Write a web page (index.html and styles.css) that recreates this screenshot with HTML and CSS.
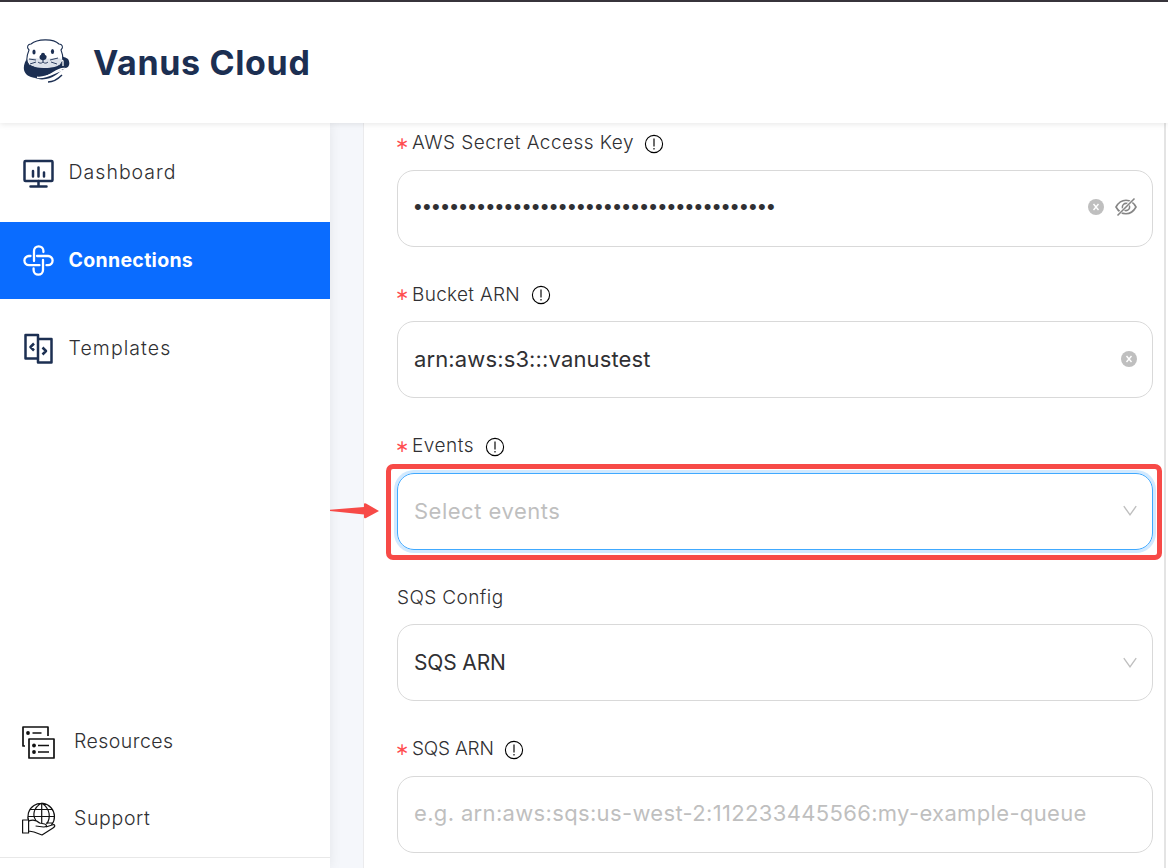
FILE: index.html
```html
<!DOCTYPE html>
<html lang="en">
<head>
<meta charset="utf-8">
<title>Vanus Cloud</title>
<link rel="stylesheet" href="styles.css">
</head>
<body>
<svg class="defs" width="0" height="0" aria-hidden="true">
  <symbol id="info" viewBox="0 0 20 20"><circle cx="10" cy="10" r="8.600" fill="none" stroke="#000" stroke-width="1.1"/><path d="M10 4.5v8M10 13.9v1.5" stroke="#000" stroke-width="1.15"/></symbol>
  <symbol id="clear" viewBox="0 0 16 16"><circle cx="8" cy="8" r="8" fill="#bfbfbf"/><path d="M5.5 5l5 6M10.5 5l-5 6" stroke="#fff" stroke-width="1.4"/></symbol>
  <symbol id="chevron" viewBox="0 0 14 12"><path d="M.8 1.2L7 9.8l6.2-8.6" fill="none" stroke="#bfbfbf" stroke-width="1.4"/></symbol>
</svg>
<header class="header">
  <svg class="logo" viewBox="0 0 48 44">
    <path d="M5 18C-1 26-1 35 8 38c8 3 15-1 22-5 5-3 9-5 13-4 4-1 4-6 2-9-2-2-5-1-8-5z" fill="#1c2f52"/>
    <path d="M6 11C3 8 5 5 8 5c6-5 22-6 28 0 3 0 5 3 2 6 2 5 3 11-1 15-7 4-24 4-31 0C2 22 4 16 6 11z" fill="#fff" stroke="#1c2f52" stroke-width="1.1"/>
    <path d="M5 20c5-2 10 0 16 0s11-2 18 0c0 7-8 9-18 9S6 26 5 20z" fill="#dce1e9"/>
    <ellipse cx="11" cy="13" rx="1.600" ry="2.500" fill="#1c2f52"/><ellipse cx="29.500" cy="12.500" rx="1.600" ry="2.500" fill="#1c2f52"/>
    <path d="M16.500 18.500c0-2 1-2.500 1.500-2.500 0-3 4-3 4 0 1 0 2 1 1.500 2.500 0 2-2 2-3.500 3-1.500-1-3.500-1-3.500-3z" fill="#1c2f52"/>
    <path d="M20 21v2c-2 2-4 1-5 0m5 0c2 2 4 1 5 0M13 21l-7-1m7 3l-6 2M27 21l8-2m-7 4l6 2" fill="none" stroke="#1c2f52" stroke-width=".9"/>
    <path d="M39 21l1 1v5" fill="none" stroke="#fff" stroke-width="1.300"/>
    <path d="M10 40c14 2 19-5 32-8" fill="none" stroke="#fff" stroke-width="1.600"/>
    <path d="M11 38.500c13 2 18-5 31-9-5 2-9 9-19 10.500-5 1-9 0-12-1.500z" fill="#1c2f52"/>
    <path d="M14 38.300c11 1 16-4.500 25-7" fill="none" stroke="#fff" stroke-width="1.500"/>
    <path d="M25 43c6 0 11-4 14-7" fill="none" stroke="#1c2f52" stroke-width="1.500"/>
  </svg>
  <h1 class="brand">Vanus Cloud</h1>
</header>
<div class="body">
  <aside class="sidebar">
    <nav class="nav">
      <a class="item">
        <svg class="nav-icon" viewBox="0 0 32 32" fill="none" stroke="#1c2f52" stroke-width="2.500" stroke-linecap="round" stroke-linejoin="round"><rect x="2.500" y="4" width="28" height="20" rx="1"/><path d="M16.500 24v4.500M8.500 29.500h16M11 14v5.500M16.500 10.500v9M22 15.500v4"/></svg>
        <span class="t-dashboard">Dashboard</span></a>
      <a class="item active">
        <svg class="nav-icon" viewBox="0 0 32 32" fill="none" stroke="#fff" stroke-width="2.300" stroke-linecap="round"><path d="M12 16V6a4.700 4.700 0 0 1 9.400 0v1M15 11h11a4.600 4.600 0 0 1 0 9.200h-1.500M21 15v10a4.700 4.700 0 0 1-9.400 0v-1.500M17.500 20.200H7A4.600 4.600 0 0 1 7 11h1.500"/></svg>
        <span class="t-connections">Connections</span></a>
      <a class="item">
        <svg class="nav-icon" viewBox="0 0 32 32" fill="none" stroke="#1c2f52" stroke-width="2.500" stroke-linejoin="round"><path d="M16 25.500H3.500V2H16zM16 6H29.500V29.500H16zM12 10.500L8.500 14l3.500 3.500M20.500 14.500l3.500 3.500-3.500 3.500"/></svg>
        <span class="t-templates">Templates</span></a>
    </nav>
    <nav class="nav-bottom">
      <a class="item">
        <svg class="big-icon" viewBox="0 0 34 34" fill="none" stroke="#111" stroke-width="1.700" stroke-linejoin="round"><path d="M3 21H1V2h25v9M7 14h25v19H7zM10.500 8h9M16 20.500h11M16 27h11"/><g fill="#111" stroke="none"><circle cx="6" cy="8" r="1.900"/><circle cx="12" cy="20.500" r="1.900"/><circle cx="12" cy="27" r="1.900"/></g></svg>
        <span class="t-resources">Resources</span></a>
      <a class="item">
        <svg class="big-icon" viewBox="0 0 34 34" fill="none" stroke="#111" stroke-width="1.200" stroke-linejoin="round"><path d="M7 20A13.300 13.300 0 1 1 29.500 23M6.500 14.500h26.500M19.700 1v20M8.500 7.500h22.500M24 21h7M19.700 1c-9 5-9 13-6 17M19.700 1c9 6 9 15 5 21"/><path d="M.6 18h6v13h-6zM6.600 19c5-2 8-1 11 2l5 1c3 1 2 3-1 3l-8-1M24 25l6-2c3-1 4 1 1 3l-11 7-8-3-5.400-1" fill="#fff"/></svg>
        <span class="t-support">Support</span></a>
    </nav>
  </aside>
  <main class="panel">
    <section class="field">
      <label class="label"><i class="req"></i><span class="l-secret">AWS Secret Access Key</span><svg class="info"><use href="#info"/></svg></label>
      <div class="input"><span class="dots">••••••••••••••••••••••••••••••••••••••••</span>
        <span class="tools"><svg class="clear"><use href="#clear"/></svg><svg class="eye" viewBox="0 0 22 20" fill="none" stroke="#858585" stroke-width="1.600"><path d="M1 10c5-9 15-9 20 0-5 9-15 9-20 0z"/><circle cx="11" cy="10" r="3.600"/><path d="M2.800 18L19.300 1.500" stroke="#fff" stroke-width="3"/><path d="M2.500 18.500L19.500 1.500"/></svg></span></div>
    </section>
    <section class="field">
      <label class="label"><i class="req"></i><span class="l-bucket">Bucket ARN</span><svg class="info"><use href="#info"/></svg></label>
      <div class="input"><span class="v-bucket">arn:aws:s3:::vanustest</span><svg class="clear"><use href="#clear"/></svg></div>
    </section>
    <section class="field">
      <label class="label"><i class="req"></i><span class="l-events">Events</span><svg class="info"><use href="#info"/></svg></label>
      <div class="input focused"><span class="placeholder v-events">Select events</span><svg class="chevron"><use href="#chevron"/></svg></div>
    </section>
    <section class="field">
      <label class="label"><span class="l-config">SQS Config</span></label>
      <div class="input"><span class="v-sqs">SQS ARN</span><svg class="chevron"><use href="#chevron"/></svg></div>
    </section>
    <section class="field">
      <label class="label"><i class="req"></i><span class="l-sqs">SQS ARN</span><svg class="info"><use href="#info"/></svg></label>
      <div class="input"><span class="placeholder v-example">e.g. arn:aws:sqs:us-west-2:112233445566:my-example-queue</span></div>
    </section>
  </main>
</div>
<div class="highlight"></div>
<svg class="arrow" viewBox="0 0 50 16"><path d="M0 6.700L34 4V1q0-1 2-.5L49 8 36 15q-2 1-2-1v-2.500L0 8z" fill="#f74a47"/></svg>
</body>
</html>
```
FILE: styles.css
```css
* { box-sizing: border-box; }
body { margin: 0; width: 1168px; height: 868px; overflow: hidden; position: relative; background: #fff; color: #303033; font-family: Inter, "Noto Sans", sans-serif; font-weight: 300; display: flex; flex-direction: column; }
svg { display: block; flex: none; }
.defs { position: absolute; }
.header { height: 123px; flex: none; position: relative; z-index: 2; background: #fff; border-top: 2px solid #37343b; box-shadow: 0 1px 6px rgba(0,0,0,.1); display: flex; align-items: center; padding: 0 0 2px 23px; }
.logo { width: 48px; height: 44px; margin-top: -2px; }
.brand { margin: 1px 0 0 22px; font-size: 34px; font-weight: 700; color: #1c2f52; white-space: nowrap; letter-spacing: .65px; }
.body { flex: 1; min-height: 0; display: flex; background: #f5f7fb; }
.sidebar { width: 330px; flex: none; background: #fff; display: flex; flex-direction: column; justify-content: space-between; padding: 11px 0 10px; box-shadow: 0 0 12px rgba(0,0,0,.08); }
.nav { display: flex; flex-direction: column; gap: 11px; }
.nav-bottom { border-bottom: 1px solid #e8e8e8; }
.item { height: 77px; display: flex; align-items: center; padding-left: 22px; font-size: 19.5px; white-space: nowrap; }
.item span { padding-bottom: 2px; }
.nav-icon { width: 32px; height: 32px; margin-right: 14.6px; }
.big-icon { width: 34px; height: 34px; margin-right: 18px; }
.t-dashboard { letter-spacing: 1px; }
.t-connections { letter-spacing: .3px; }
.t-templates { letter-spacing: 1.05px; }
.t-resources { letter-spacing: .45px; }
.t-support { letter-spacing: .65px; }
.active { background: #0a6cff; color: #fff; font-weight: 700; }
.panel { margin-left: 33px; width: 803px; background: #fff; border-left: 1px solid #ebebed; border-right: 2px solid #e4e4e4; padding: 0 11px 0 33px; margin-top: -7.3px; box-shadow: 2px 0 #fff; }
.field { height: 151.55px; }
.label { height: 54px; display: flex; align-items: center; font-size: 19px; white-space: nowrap; padding-bottom: 0; }
.req { width: 9px; margin: 0 8px 0 -2px; color: #ff4d4f; font: 300 17px/20px "Noto Sans", sans-serif; }
.req::before { content: "∗"; }
.info { width: 20px; height: 20px; margin: 2px 0 0 10.5px; }
.l-secret { letter-spacing: .46px; }
.l-bucket { letter-spacing: .3px; }
.l-events { letter-spacing: .5px; }
.l-config { letter-spacing: .4px; }
.l-sqs { letter-spacing: -.2px; }
.input { height: 77px; border: 1px solid #d9d9d9; border-radius: 17px; padding: 0 15px 2px 16px; display: flex; align-items: center; justify-content: space-between; font-size: 22px; font-weight: 400; white-space: nowrap; }
.v-bucket { letter-spacing: .13px; padding-top: 1px; }
.v-events { letter-spacing: .5px; padding-top: 1px; }
.v-sqs { font-size: 21px; letter-spacing: -.15px; padding-top: 2px; }
.v-example { letter-spacing: .34px; }
.input .chevron { margin-top: 2px; }
.placeholder { color: #bfbfbf; }
.focused { border-color: #40a9ff; box-shadow: 0 0 0 3px #d1e9ff; }
.tools { display: flex; align-items: center; gap: 11px; }
.clear { width: 16px; height: 16px; }
.eye { width: 22px; height: 20px; }
.chevron { width: 14px; height: 12px; }
.dots { font-family: "Liberation Sans", sans-serif; font-size: 22px; letter-spacing: 1.35px; }
.highlight { position: absolute; left: 386px; top: 464px; width: 776px; height: 96px; border: 5px solid #f74a47; border-radius: 7px; z-index: 3; }
.arrow { position: absolute; left: 330px; top: 503px; width: 50px; height: 16px; z-index: 3; }
```
